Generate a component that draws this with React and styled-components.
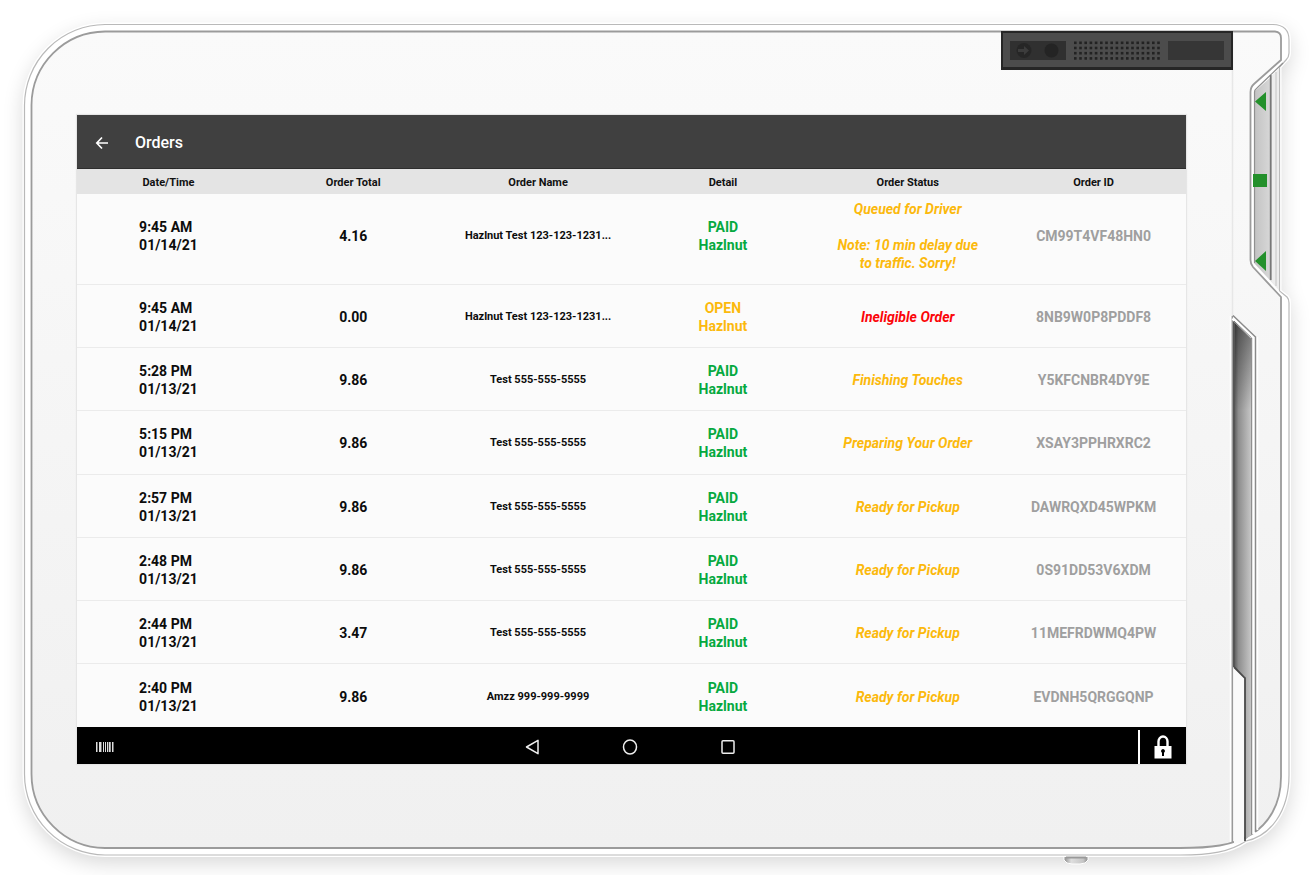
import React from "react";
import styled, { createGlobalStyle } from "styled-components";

const GREEN = "#06a940";
const AMBER = "#fbb90d";
const RED = "#fb0509";

const columns = ["Date/Time", "Order Total", "Order Name", "Detail", "Order Status", "Order ID"];

const orders = [
  { id: "CM99T4VF48HN0", time: "9:45 AM", date: "01/14/21", total: "4.16", name: "Hazlnut Test 123-123-1231...", paid: true, status: "Queued for Driver", note: "Note: 10 min delay due to traffic. Sorry!" },
  { id: "8NB9W0P8PDDF8", time: "9:45 AM", date: "01/14/21", total: "0.00", name: "Hazlnut Test 123-123-1231...", paid: false, status: "Ineligible Order", error: true },
  { id: "Y5KFCNBR4DY9E", time: "5:28 PM", date: "01/13/21", total: "9.86", name: "Test 555-555-5555", paid: true, status: "Finishing Touches" },
  { id: "XSAY3PPHRXRC2", time: "5:15 PM", date: "01/13/21", total: "9.86", name: "Test 555-555-5555", paid: true, status: "Preparing Your Order" },
  { id: "DAWRQXD45WPKM", time: "2:57 PM", date: "01/13/21", total: "9.86", name: "Test 555-555-5555", paid: true, status: "Ready for Pickup" },
  { id: "0S91DD53V6XDM", time: "2:48 PM", date: "01/13/21", total: "9.86", name: "Test 555-555-5555", paid: true, status: "Ready for Pickup" },
  { id: "11MEFRDWMQ4PW", time: "2:44 PM", date: "01/13/21", total: "3.47", name: "Test 555-555-5555", paid: true, status: "Ready for Pickup" },
  { id: "EVDNH5QRGGQNP", time: "2:40 PM", date: "01/13/21", total: "9.86", name: "Amzz 999-999-9999", paid: true, status: "Ready for Pickup" },
];

// the plastic body of the tablet, drawn behind the screen
const TabletBody = () => {
  const outer =
    "M105 24.5H1273Q1289 25 1289 40V53Q1289 57 1286 60L1279.500 67V291L1287 297Q1289 299 1289 303V775C1289 812 1270 836 1246 841C1230 852 1210 855 1180 855H105A81 81 0 0 1 24.500 774V105A81 81 0 0 1 105 24.500Z";
  const inner =
    "M105 31.500H1275Q1281 32 1281 38V60L1254 84Q1250.500 87 1250.500 92V260Q1250.500 264 1253 267L1281 297V777C1281 805 1268 824 1252 834C1232 846 1210 848 1180 848H105A74 74 0 0 1 31.500 774V105A74 74 0 0 1 105 31.500Z";
  const dots = [];
  for (let r = 0; r < 4; r++) {
    for (let c = 0; c < 17; c++) {
      dots.push(<rect key={`${r}-${c}`} x={1074 + c * 5.2} y={41.5 + r * 5.2} width="2.600" height="2.600" fill="#222" />);
    }
  }
  return (
    <BodyArt viewBox="0 0 1313 875" preserveAspectRatio="none" aria-hidden="true">
      <defs>
        <linearGradient id="face" x1="0" y1="0" x2="0" y2="1">
          <stop offset="0" stopColor="#fafafa" />
          <stop offset="1" stopColor="#f0f0f0" />
        </linearGradient>
        <linearGradient id="rail" x1="0" y1="0" x2="1" y2="0">
          <stop offset="0" stopColor="#c2c2c2" />
          <stop offset="1" stopColor="#e4e4e4" />
        </linearGradient>
        <linearGradient id="slot" x1="0" y1="0" x2="1" y2="0">
          <stop offset="0" stopColor="#4c4c4c" />
          <stop offset="0.3" stopColor="#8d8d8d" />
          <stop offset="1" stopColor="#c6c6c6" />
        </linearGradient>
        <linearGradient id="slotTop" x1="0" y1="0" x2="0" y2="1">
          <stop offset="0" stopColor="#000" stopOpacity="0.75" />
          <stop offset="1" stopColor="#000" stopOpacity="0" />
        </linearGradient>
        <linearGradient id="nub" x1="0" y1="0" x2="1" y2="0">
          <stop offset="0" stopColor="#8c8c8c" />
          <stop offset="0.3" stopColor="#dedede" />
          <stop offset="0.8" stopColor="#c6c6c6" />
          <stop offset="1" stopColor="#8c8c8c" />
        </linearGradient>
        <filter id="soft" x="-5%" y="-5%" width="110%" height="112%">
          <feGaussianBlur stdDeviation="11" />
        </filter>
      </defs>

      <path d={outer} transform="translate(0 7)" fill="#000" opacity="0.17" filter="url(#soft)" />
      <path d="M1064 854H1088V860Q1086 864 1080 864H1072Q1066 864 1064 860Z" fill="url(#nub)" stroke="#fff" strokeWidth="1" />
      <path d={outer} fill="#fff" stroke="#fff" strokeWidth="4" />
      <path d={outer} fill="#fff" stroke="#b9b9b9" strokeWidth="1.200" />
      <path d="M1066 857.500H1086" stroke="#999" strokeWidth="2" />

      {/* side rail with its green markers */}
      <path d="M1254 92L1280 69V291L1254 263Z" fill="url(#rail)" />
      <path d="M1271.500 76L1279 69V290L1271.500 282Z" fill="#ededed" />
      <path d="M1254.500 263V92Q1254.500 90 1257 88L1283 63" fill="none" stroke="#909090" strokeWidth="1.200" />
      <path d="M1270.700 75V280" stroke="#777" strokeWidth="1.800" />
      <path d="M1276 72V286" stroke="#c4c4c4" strokeWidth="1" />
      <path d="M1279.500 67V291" stroke="#bbb" strokeWidth="1" />
      <path d="M1255 101.500L1266 92V111ZM1255 261L1266 251V271ZM1253 174H1267V187H1253Z" fill="#23902b" />

      <path d={inner} fill="url(#face)" stroke="#fff" strokeWidth="5" />
      <path d={inner} fill="url(#face)" stroke="#9b9b9b" strokeWidth="1.800" />
      <path d="M1253 174H1267V187H1253Z" fill="#23902b" />
      <path d="M1232.500 32V316" stroke="#e7e7e7" strokeWidth="1.500" />

      {/* card reader slot */}
      <path d="M1233 318L1251 336V835L1245 840V677L1234 667Z" fill="url(#slot)" />
      <path d="M1234 322L1251 338V410H1234Z" fill="url(#slotTop)" opacity="0.6" />
      <path d="M1234 320V667" stroke="#555" strokeWidth="2" />
      <path d="M1234 668L1244 678V842L1234 844Z" fill="#fafafa" />
      <path d="M1234 667L1245 678V841" fill="none" stroke="#4a4a4a" strokeWidth="1.800" />
      <path d="M1230.500 316V842" stroke="#fff" strokeWidth="1.500" />
      <path d="M1232.300 316V842" stroke="#999" strokeWidth="1.400" />
      <path d="M1253.500 834V338L1233 318" fill="none" stroke="#fff" strokeWidth="4" />
      <path d="M1251.700 834V338L1234 321" fill="none" stroke="#777" strokeWidth="1" />
      <path d="M1255.500 832V337L1233 315.500" fill="none" stroke="#8a8a8a" strokeWidth="1.500" />
      <path d="M1257.500 830V337" stroke="#fff" strokeWidth="1.500" />

      {/* camera and speaker */}
      <rect x="1001" y="31" width="232" height="39" fill="#262626" />
      <rect x="1003" y="33" width="228" height="34" fill="#4c4c4c" />
      <rect x="1010" y="41" width="56" height="19" fill="#303030" />
      <circle cx="1024" cy="50.500" r="7.500" fill="#262626" />
      <circle cx="1051.500" cy="50.500" r="7" fill="#242424" />
      <path d="M1018 49H1024V46L1029 50.500L1024 55V52H1018Z" fill="#3c3c3c" />
      {dots}
      <rect x="1168" y="41" width="56" height="19" fill="#363636" />
    </BodyArt>
  );
};

const App = () => {
  return (
    <>
      <GlobalStyle />
      <Tablet>
        <TabletBody />
        <Screen>
          <AppBar>
            <BackButton type="button" aria-label="Back">
              <svg width="14" height="14" viewBox="0 0 14 14" fill="none" stroke="#fff" strokeWidth="1.700">
                <path d="M13 7H2M7 1.500L1.800 7L7 12.500" />
              </svg>
            </BackButton>
            <Title>Orders</Title>
          </AppBar>

          <Table>
            <thead>
              <tr>
                {columns.map((label) => (
                  <HeadCell key={label} scope="col">{label}</HeadCell>
                ))}
              </tr>
            </thead>
            <tbody>
              {orders.map((order) => (
                <Row key={order.id} $tall={Boolean(order.note)}>
                  <Cell>
                    <Stamp>
                      {order.time}
                      <br />
                      {order.date}
                    </Stamp>
                  </Cell>
                  <Cell>{order.total}</Cell>
                  <NameCell>{order.name}</NameCell>
                  <Cell $color={order.paid ? GREEN : AMBER}>
                    {order.paid ? "PAID" : "OPEN"}
                    <br />
                    Hazlnut
                  </Cell>
                  <StatusCell $color={order.error ? RED : AMBER}>
                    {order.status}
                    {order.note && <Note>{order.note}</Note>}
                  </StatusCell>
                  <IdCell>{order.id}</IdCell>
                </Row>
              ))}
            </tbody>
          </Table>

          <NavBar>
            <ScanButton type="button" aria-label="Scan barcode">
              <svg width="18" height="10" viewBox="0 0 18 10" fill="#ddd">
                <path d="M0 0H1.500V10H0ZM3 0H5.500V10H3ZM7 0H8V10H7ZM9 0H10V10H9ZM11 0H12V10H11ZM12.700 0H14.700V10H12.700ZM16 0H17.500V10H16Z" />
              </svg>
            </ScanButton>
            <NavKeys>
              <NavButton type="button" aria-label="Back">
                <svg width="16" height="16" viewBox="0 0 16 16" fill="none" stroke="#eee" strokeWidth="1.500" strokeLinejoin="round">
                  <path d="M14 1.300V14.700L2.500 8Z" />
                </svg>
              </NavButton>
              <NavButton type="button" aria-label="Home">
                <svg width="16" height="16" viewBox="0 0 16 16" fill="none" stroke="#eee" strokeWidth="1.500">
                  <ellipse cx="8" cy="8" rx="6.500" ry="7" />
                </svg>
              </NavButton>
              <NavButton type="button" aria-label="Recent apps">
                <svg width="16" height="16" viewBox="0 0 16 16" fill="none" stroke="#eee" strokeWidth="1.500">
                  <rect x="2" y="1.700" width="12" height="12.600" rx="1" />
                </svg>
              </NavButton>
            </NavKeys>
            <LockButton type="button" aria-label="Lock screen">
              <svg width="18" height="24" viewBox="0 0 18 24">
                <path d="M4.500 11V6.500A4.500 5 0 0 1 13.500 6.500V11" fill="none" stroke="#fff" strokeWidth="2.400" />
                <rect x="0.500" y="11" width="17" height="12.500" fill="#fff" />
                <path d="M9 14A2 2 0 0 0 8 17.700V21H10V17.700A2 2 0 0 0 9 14Z" fill="#000" />
              </svg>
            </LockButton>
          </NavBar>
        </Screen>
      </Tablet>
    </>
  );
};

const GlobalStyle = createGlobalStyle`
  body {
    margin: 0;
    background: #fff;
    font-family: Roboto, "Liberation Sans", sans-serif;
  }
  * {
    box-sizing: border-box;
  }
`;

const Tablet = styled.main`
  position: relative;
  display: flex;
  min-height: 100vh;
  padding: 115px 127px 111px 77px;
`;

const BodyArt = styled.svg`
  position: absolute;
  inset: 0;
  width: 100%;
  height: 100%;
`;

const Screen = styled.section`
  position: relative;
  flex: 1;
  display: flex;
  flex-direction: column;
  min-width: 0;
  background: #fbfbfb;
  box-shadow: 0 0 1px 1px #e6e6e6;
`;

const AppBar = styled.header`
  display: flex;
  align-items: center;
  gap: 26px;
  height: 54px;
  padding: 3px 18px 0;
  background: #404040;
  border-bottom: 1px solid #2e2e2e;
`;

const IconButton = styled.button`
  display: flex;
  align-items: center;
  justify-content: center;
  padding: 0;
  border: 0;
  background: none;
  cursor: pointer;
`;

const BackButton = styled(IconButton)`
  width: 14px;
  height: 24px;
`;

const Title = styled.h1`
  margin: 0;
  color: #fff;
  font-size: 16px;
  font-weight: 500;
  line-height: 24px;
`;

const Table = styled.table`
  flex: 1;
  width: 100%;
  table-layout: fixed;
  border-collapse: collapse;
`;

const HeadCell = styled.th`
  height: 25px;
  padding: 2px 2px 0 0;
  background: #e4e4e4;
  color: #111;
  font-size: 11px;
  font-weight: 700;
  line-height: 16px;
  text-align: center;

  &:last-child {
    padding-right: 0;
  }
`;

const Cell = styled.td`
  height: 63px;
  padding: 2px 2px 0 0;
  color: ${(props) => props.$color || "#0c0c0c"};
  font-size: 14px;
  font-weight: 700;
  line-height: 18px;
  text-align: center;
  vertical-align: middle;
`;

const Row = styled.tr`
  border-bottom: 1px solid #ebebeb;

  ${Cell} {
    padding-bottom: ${(props) => (props.$tall ? "8px" : "0")};
    height: ${(props) => (props.$tall ? "90px" : "63px")};
  }

  &:last-child {
    border-bottom: 0;
  }
`;

const Stamp = styled.time`
  display: inline-block;
  text-align: left;
`;

const NameCell = styled(Cell)`
  font-size: 11px;
`;

const StatusCell = styled(Cell)`
  font-style: italic;
`;

const Note = styled.p`
  max-width: 150px;
  margin: 18px auto 0;
`;

const IdCell = styled(Cell)`
  padding-right: 0;
  color: #9f9f9f;
`;

const NavBar = styled.nav`
  display: grid;
  grid-template-columns: 1fr auto 1fr;
  align-items: center;
  height: 37px;
  padding: 3px 0 0 19px;
  background: #000;
`;

const ScanButton = styled(IconButton)`
  justify-self: start;
  height: 24px;
`;

const NavKeys = styled.div`
  display: flex;
  gap: 74px;
  padding-right: 22px;
`;

const NavButton = styled(IconButton)`
  width: 24px;
  height: 24px;
`;

const LockButton = styled(IconButton)`
  justify-self: end;
  width: 48px;
  height: 34px;
  border-left: 2px solid #fff;
`;

export default App;
